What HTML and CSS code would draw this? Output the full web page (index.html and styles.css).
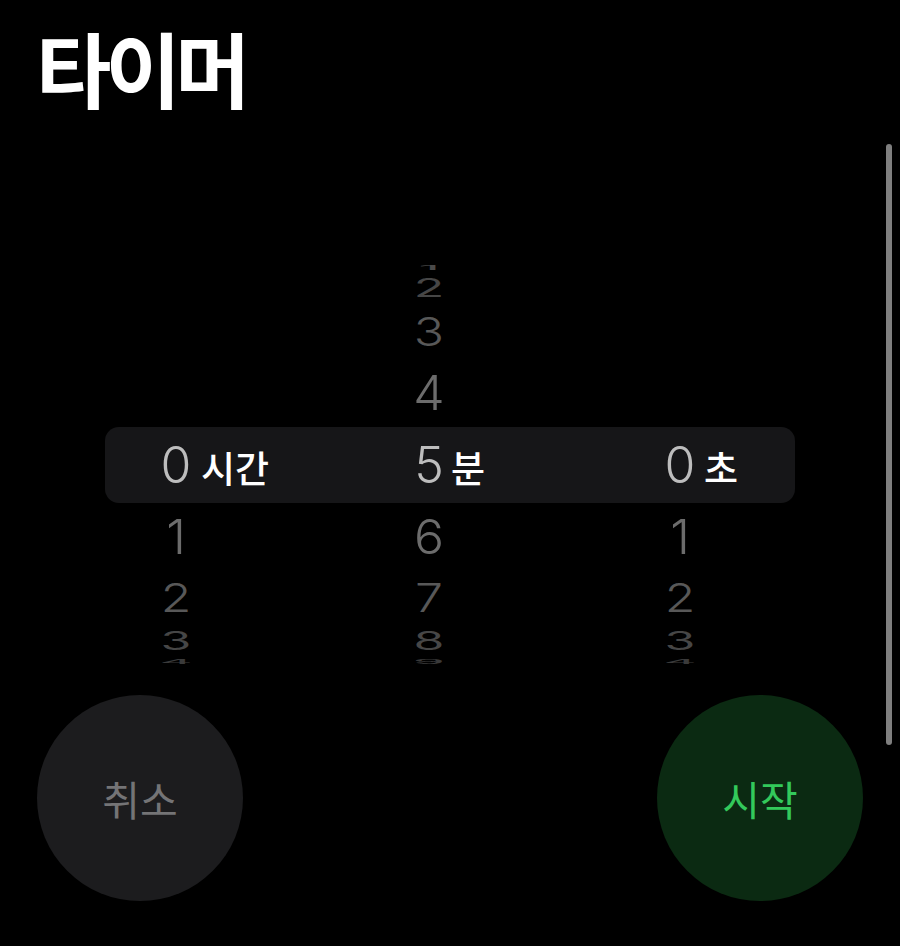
FILE: index.html
```html
<!DOCTYPE html>
<html lang="ko">
<head>
    <meta charset="UTF-8">
    <meta name="viewport" content="width=device-width, initial-scale=1.0">
    <title>타이머</title>
<link rel="stylesheet" href="styles.css">
</head>

<body>
    <h1 class="title">타이머</h1>

    <div class="picker">
        <div class="row k4 top">
            <div class="cell hours"></div>
            <div class="cell minutes"><span class="num">1</span></div>
            <div class="cell seconds"></div>
        </div>
        <div class="row k3">
            <div class="cell hours"></div>
            <div class="cell minutes"><span class="num">2</span></div>
            <div class="cell seconds"></div>
        </div>
        <div class="row k2">
            <div class="cell hours"></div>
            <div class="cell minutes"><span class="num">3</span></div>
            <div class="cell seconds"></div>
        </div>
        <div class="row k1">
            <div class="cell hours"></div>
            <div class="cell minutes"><span class="num">4</span></div>
            <div class="cell seconds"></div>
        </div>

        <div class="row selected">
            <div class="cell hours"><span class="num">0</span><span class="unit">시간</span></div>
            <div class="cell minutes"><span class="num">5</span><span class="unit">분</span></div>
            <div class="cell seconds"><span class="num">0</span><span class="unit">초</span></div>
        </div>

        <div class="row k1">
            <div class="cell hours"><span class="num">1</span></div>
            <div class="cell minutes"><span class="num">6</span></div>
            <div class="cell seconds"><span class="num">1</span></div>
        </div>
        <div class="row k2">
            <div class="cell hours"><span class="num">2</span></div>
            <div class="cell minutes"><span class="num">7</span></div>
            <div class="cell seconds"><span class="num">2</span></div>
        </div>
        <div class="row k3">
            <div class="cell hours"><span class="num">3</span></div>
            <div class="cell minutes"><span class="num">8</span></div>
            <div class="cell seconds"><span class="num">3</span></div>
        </div>
        <div class="row k4 bottom">
            <div class="cell hours"><span class="num">4</span></div>
            <div class="cell minutes"><span class="num">9</span></div>
            <div class="cell seconds"><span class="num">4</span></div>
        </div>
    </div>

    <div class="buttons">
        <button class="circle-btn cancel-btn">취소</button>
        <button class="circle-btn start-btn">시작</button>
    </div>

    <div class="scrollbar"></div>
</body>
</html>
```

FILE: styles.css
```css
body {
    margin: 0;
    background: #000;
    color: #fff;
    font-family: "Noto Sans CJK KR", "Noto Sans", sans-serif;
    height: 946px;
    overflow: hidden;
    position: relative;
}
.title {
    margin: 0;
    padding: 26px 0 0 36px;
    font-size: 82px;
    line-height: 82px;
    font-weight: 700;
    letter-spacing: -6px;
}

/* picker wheel: rows get flatter towards the edges */
.picker {
    margin: 156px 0 0 105px;
    width: 690px;
}
.row {
    display: grid;
    grid-template-columns: 230px 230px 230px;
}
.cell {
    display: flex;
    align-items: center;
    height: 100%;
}
.cell.hours {
    padding-left: 51px;
}
.cell.minutes {
    padding-left: 74px;
}
.cell.seconds {
    padding-left: 95px;
}
.num {
    display: block;
    width: 40px;
    text-align: center;
    font-family: Inter, "Liberation Sans", sans-serif;
    font-weight: 300;
    font-size: 50px;
    line-height: 50px;
}
.k1 { height: 68px; }
.k2 { height: 54px; }
.k3 { height: 33px; }
.k4 { height: 8px; }
.k1 .num {
    color: #6c6c6c;
    font-size: 48px;
    line-height: 68px;
    transform: scaleX(1.04);
}
.k2 .num {
    color: #585858;
    font-size: 40px;
    line-height: 54px;
    transform: scaleX(1.25);
}
.k3 .num {
    color: #464646;
    font-size: 25px;
    line-height: 33px;
    font-weight: 400;
    transform: scaleX(2);
}
.k4 .num {
    color: #3a3a3a;
    font-size: 6px;
    line-height: 8px;
    font-weight: 500;
    transform: scaleX(8.3);
}
.k4.top .num {
    color: #4a4a4a;
}
.selected {
    height: 76px;
    background: #161618;
    border-radius: 14px;
}
.selected .num {
    color: #bdbdbd;
}
.unit {
    font-size: 37px;
    font-weight: 500;
    line-height: 37px;
    margin-top: 4px;
}
.hours .unit { margin-left: 5px; }
.minutes .unit { margin-left: 2px; }
.seconds .unit { margin-left: 4px; }

/* buttons */
.buttons {
    display: flex;
    justify-content: space-between;
    padding: 0 37px;
    margin-top: 29px;
}
.circle-btn {
    width: 206px;
    height: 206px;
    border-radius: 50%;
    border: none;
    font-family: "Noto Sans CJK KR", sans-serif;
    font-size: 41px;
    font-weight: 400;
    padding: 0;
    cursor: pointer;
}
.cancel-btn {
    background: #1c1c1e;
    color: #747476;
}
.start-btn {
    background: #0b2a12;
    color: #33c95b;
}

.scrollbar {
    position: absolute;
    top: 144px;
    right: 8px;
    width: 6px;
    height: 601px;
    border-radius: 3px;
    background: #7f7f7f;
}
```
